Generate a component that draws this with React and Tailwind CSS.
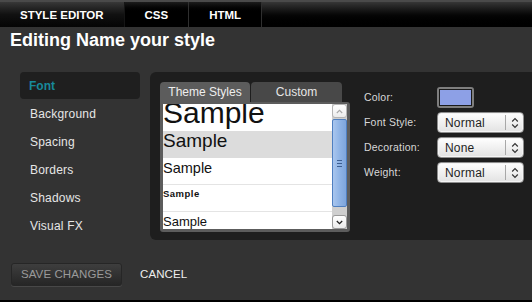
import React from "react";

function Chevrons() {
  return (
    <svg width="8" height="12" viewBox="0 0 8 12" fill="none" stroke="#333" strokeWidth="1.2">
      <path d="M1.2 4.5 L4 1.7 L6.8 4.5" />
      <path d="M1.2 7.5 L4 10.3 L6.8 7.5" />
    </svg>
  );
}

function Select({ value }) {
  return (
    <div className="h-[21px] w-[87px] rounded-[4px] border border-[#8e8e8e] bg-linear-to-b from-white to-[#e2e2e2] flex items-center shadow-[inset_0_0_0_1px_#f4f4f4]">
      <span className="flex-1 pl-[7px] text-[12px] leading-[12px] text-[#1e1e1e] tracking-[0.2px]">{value}</span>
      <div className="w-px h-[15px] bg-[#a8a8a8]" />
      <div className="w-[17px] flex justify-center items-center">
        <Chevrons />
      </div>
    </div>
  );
}

export default function App() {
  const nav = ["Background", "Spacing", "Borders", "Shadows", "Visual FX"];
  return (
    <div className="w-[532px] h-[302px] bg-[#333333] flex flex-col overflow-hidden font-['Liberation_Sans',Arial,sans-serif]">
      {/* Top bar */}
      <div className="h-[27px] flex border-t-2 border-[#4a4a4a] bg-linear-to-b from-[#363636] via-[#050505] via-55% to-black">
        <div className="px-5 pt-[2px] flex items-center text-[11.5px] font-bold text-white bg-linear-to-b from-[#383838] via-[#111] to-[#050505] border-r border-[#151515]">
          STYLE EDITOR
        </div>
        <div className="px-5 pt-[2px] flex items-center text-[11.5px] font-bold text-white bg-linear-to-b from-[#1c1c1c] via-black via-45% to-black border-r border-[#2f2f2f]">
          CSS
        </div>
        <div className="px-5 pt-[2px] flex items-center text-[11.5px] font-bold text-white bg-linear-to-b from-[#1c1c1c] via-black via-45% to-black border-r border-[#2f2f2f]">
          HTML
        </div>
      </div>

      <h1 className="mt-[4px] ml-[10px] text-[18px] leading-[18px] font-bold text-white">
        Editing Name your style
      </h1>

      {/* Main row */}
      <div className="mt-[23px] flex h-[168px]">
        <div className="ml-[20px] w-[120px] flex flex-col">
          <div className="h-[27px] mb-[1px] rounded-[4px] bg-[#1f1f1f] flex items-center pl-[9px] text-[12px] font-bold text-[#18899a]">
            Font
          </div>
          {nav.map((n) => (
            <div key={n} className="h-[28px] flex items-center pl-[10px] text-[12px] tracking-[0.2px] text-[#e6e6e6]">
              {n}
            </div>
          ))}
        </div>

        <div className="ml-[10px] flex-1 bg-[#1e1e1e] rounded-l-[6px] pt-[10px] pl-[10px] flex">
          {/* list column */}
          <div className="w-[190px] flex flex-col">
            <div className="h-[20px] flex">
              <div className="w-[90px] rounded-t-[4px] bg-[#5c5c5c] flex items-center justify-center text-[12px] text-[#eeeeee]">
                Theme Styles
              </div>
              <div className="w-[91px] ml-[1px] rounded-t-[4px] bg-[#484848] flex items-center justify-center text-[12px] text-[#e6e6e6]">
                Custom
              </div>
            </div>
            <div className="h-[130px] border-[#5c5c5c] border-l-[3px] border-r-[3px] border-b-[3px] border-t-[2px] rounded-b-[3px] rounded-tr-[3px] bg-white flex overflow-hidden">
              <div className="w-[169px] flex flex-col overflow-hidden text-[#111]">
                <div className="h-[27px] shrink-0 overflow-hidden text-[30px] leading-[18px]">Sample</div>
                <div className="h-[27px] shrink-0 bg-[#dcdcdc] text-[19px] leading-[19px]">Sample</div>
                <div className="h-[27px] shrink-0 border-b border-[#e4e4e4] pt-[3px] text-[14.5px] leading-[14.5px]">Sample</div>
                <div className="h-[27px] shrink-0 border-b border-[#e4e4e4] pt-[4px] text-[9.5px] leading-[9.5px] font-bold tracking-[0.5px]">Sample</div>
                <div className="h-[27px] shrink-0 pt-[3px] text-[13px] leading-[13px]">Sample</div>
              </div>
              {/* scrollbar */}
              <div className="w-[15px] flex flex-col bg-[#cfcfcf]">
                <div className="h-[14px] bg-linear-to-b from-white to-[#ececec] border border-[#b4b4b4] rounded-[3px] flex items-center justify-center">
                  <svg width="7" height="5" viewBox="0 0 7 5" fill="none" stroke="#a8a8a8" strokeWidth="1.1">
                    <path d="M0.8 4 L3.5 1.3 L6.2 4" />
                  </svg>
                </div>
                <div className="mt-[1px] h-[88px] bg-linear-to-r from-[#a9c6ee] via-[#8fb4e6] to-[#7ea5dc] border border-[#4f7fc0] rounded-[2px] flex flex-col items-center justify-center gap-[2px]">
                  <div className="w-[5px] h-px bg-[#3d5f92]" />
                  <div className="w-[5px] h-px bg-[#3d5f92]" />
                  <div className="w-[5px] h-px bg-[#3d5f92]" />
                </div>
                <div className="flex-1" />
                <div className="h-[14px] bg-linear-to-b from-white to-[#ececec] border border-[#9a9a9a] rounded-[3px] flex items-center justify-center">
                  <svg width="7" height="5" viewBox="0 0 7 5" fill="none" stroke="#222" strokeWidth="1.3">
                    <path d="M0.8 1 L3.5 3.7 L6.2 1" />
                  </svg>
                </div>
              </div>
            </div>
          </div>

          {/* form column */}
          <div className="ml-[14px] mt-[5px] grid grid-cols-[73px_87px] auto-rows-[21px] gap-y-[4px] items-center">
            <span className="text-[10.5px] text-[#d8d8d8] tracking-[0.2px]">Color:</span>
            <div className="w-[37px] h-[21px] rounded-[3px] border-2 border-[#7e7e7e]">
              <div className="w-full h-full border border-[#1a1a1a] bg-[#8da0e6]" />
            </div>
            <span className="text-[10.5px] text-[#d8d8d8] tracking-[0.2px]">Font Style:</span>
            <Select value="Normal" />
            <span className="text-[10.5px] text-[#d8d8d8] tracking-[0.2px]">Decoration:</span>
            <Select value="None" />
            <span className="text-[10.5px] text-[#d8d8d8] tracking-[0.2px]">Weight:</span>
            <Select value="Normal" />
          </div>
        </div>
      </div>

      {/* Footer */}
      <div className="mt-[23px] ml-[11px] flex items-center">
        <div className="h-[23px] w-[111px] rounded-[3px] bg-linear-to-b from-[#3e3e3e] to-[#262626] border border-[#262626] shadow-[0_1px_0_#484848] flex items-center justify-center text-[11.5px] text-[#9a9a9a] tracking-[0.1px]">
          SAVE CHANGES
        </div>
        <span className="ml-[18px] text-[11.5px] text-[#eeeeee] tracking-[0.1px]">CANCEL</span>
      </div>

      <div className="mt-auto h-[2px] bg-black" />
    </div>
  );
}
